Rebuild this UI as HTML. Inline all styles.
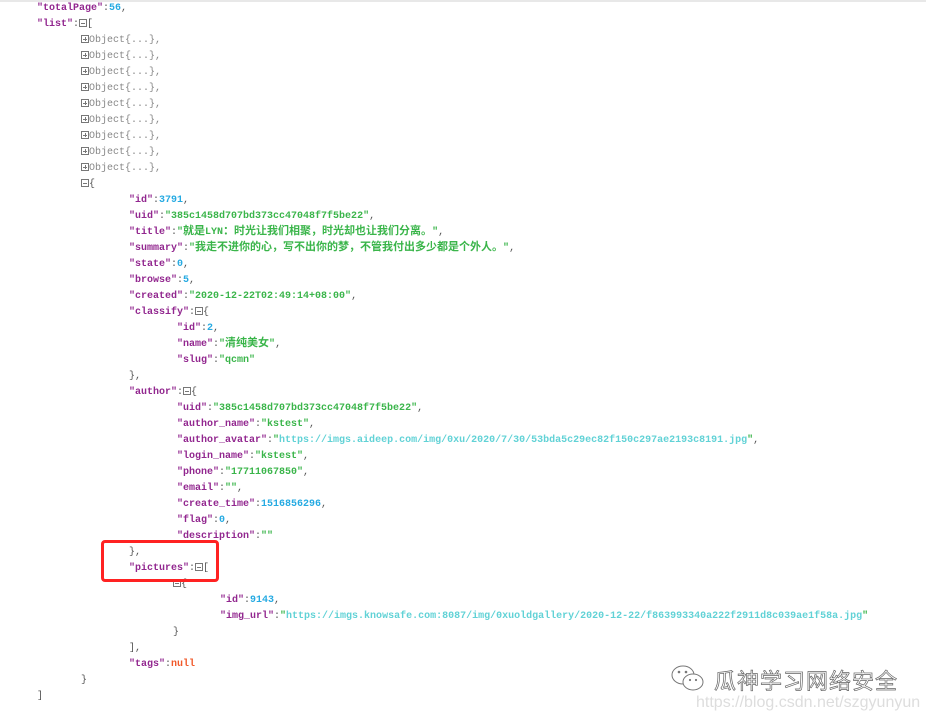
<!DOCTYPE html>
<html><head><meta charset="utf-8"><style>
html,body{margin:0;padding:0;background:#fff;width:926px;height:722px;overflow:hidden;position:relative}
.top{position:absolute;left:0;top:0;width:926px;height:2px;background:#e8e8e8}
.c{position:absolute;left:0;top:1px;font-family:"Liberation Mono","Noto Sans CJK SC",monospace;font-size:10px;line-height:16px;color:#555}
.l{height:16px;line-height:16px;position:relative;white-space:pre;overflow:visible}
.k{color:#92278f;font-weight:bold}
.s{color:#3ab54a;font-weight:bold}
.n{color:#25aae2;font-weight:bold}
.u{color:#61d2d6;font-weight:bold}
.x{color:#f1592a;font-weight:bold}
.o{color:#888}
.z{font-family:"Noto Sans CJK SC",sans-serif;font-size:11px;font-weight:bold;line-height:0}
.b{display:inline-block;width:8px;height:8px;border:1px solid #777;box-sizing:border-box;vertical-align:-1px;position:relative}
.b:before{content:"";position:absolute;left:1px;right:1px;top:3px;height:1px;background:#777}
.p:after{content:"";position:absolute;top:1px;bottom:1px;left:3px;width:1px;background:#777}
.box{position:absolute;left:101px;top:540px;width:112px;height:36px;border:3px solid #f22;border-radius:4px}
.wm{position:absolute;left:714px;top:666px;font-family:"Noto Sans CJK SC",sans-serif;font-size:22px;line-height:28px;color:#fff;-webkit-text-stroke:0.7px #666;letter-spacing:1px}
.wm2{position:absolute;left:696px;top:694px;font-family:"Liberation Sans",sans-serif;font-size:16px;color:#ddd}
</style></head><body>
<div class="top"></div>
<div class="c">
<div class="l" style="left:37px"><span class="k">"totalPage"</span>:<span class="n">56</span>,</div>
<div class="l" style="left:37px"><span class="k">"list"</span>:<span class="b"></span>[</div>
<div class="l o" style="left:81px"><span class="b p"></span>Object{...},</div>
<div class="l o" style="left:81px"><span class="b p"></span>Object{...},</div>
<div class="l o" style="left:81px"><span class="b p"></span>Object{...},</div>
<div class="l o" style="left:81px"><span class="b p"></span>Object{...},</div>
<div class="l o" style="left:81px"><span class="b p"></span>Object{...},</div>
<div class="l o" style="left:81px"><span class="b p"></span>Object{...},</div>
<div class="l o" style="left:81px"><span class="b p"></span>Object{...},</div>
<div class="l o" style="left:81px"><span class="b p"></span>Object{...},</div>
<div class="l o" style="left:81px"><span class="b p"></span>Object{...},</div>
<div class="l" style="left:81px"><span class="b"></span>{</div>
<div class="l" style="left:129px"><span class="k">"id"</span>:<span class="n">3791</span>,</div>
<div class="l" style="left:129px"><span class="k">"uid"</span>:<span class="s">"385c1458d707bd373cc47048f7f5be22"</span>,</div>
<div class="l" style="left:129px"><span class="k">"title"</span>:<span class="s">"<span class="z">就是</span>LYN<span class="z">：时光让我们相聚，时光却也让我们分离。</span>"</span>,</div>
<div class="l" style="left:129px"><span class="k">"summary"</span>:<span class="s">"<span class="z">我走不进你的心，写不出你的梦，不管我付出多少都是个外人。</span>"</span>,</div>
<div class="l" style="left:129px"><span class="k">"state"</span>:<span class="n">0</span>,</div>
<div class="l" style="left:129px"><span class="k">"browse"</span>:<span class="n">5</span>,</div>
<div class="l" style="left:129px"><span class="k">"created"</span>:<span class="s">"2020-12-22T02:49:14+08:00"</span>,</div>
<div class="l" style="left:129px"><span class="k">"classify"</span>:<span class="b"></span>{</div>
<div class="l" style="left:177px"><span class="k">"id"</span>:<span class="n">2</span>,</div>
<div class="l" style="left:177px"><span class="k">"name"</span>:<span class="s">"<span class="z">清纯美女</span>"</span>,</div>
<div class="l" style="left:177px"><span class="k">"slug"</span>:<span class="s">"qcmn"</span></div>
<div class="l" style="left:129px">},</div>
<div class="l" style="left:129px"><span class="k">"author"</span>:<span class="b"></span>{</div>
<div class="l" style="left:177px"><span class="k">"uid"</span>:<span class="s">"385c1458d707bd373cc47048f7f5be22"</span>,</div>
<div class="l" style="left:177px"><span class="k">"author_name"</span>:<span class="s">"kstest"</span>,</div>
<div class="l" style="left:177px"><span class="k">"author_avatar"</span>:<span class="s">"</span><span class="u">https://imgs.aideep.com/img/0xu/2020/7/30/53bda5c29ec82f150c297ae2193c8191.jpg</span><span class="s">"</span>,</div>
<div class="l" style="left:177px"><span class="k">"login_name"</span>:<span class="s">"kstest"</span>,</div>
<div class="l" style="left:177px"><span class="k">"phone"</span>:<span class="s">"17711067850"</span>,</div>
<div class="l" style="left:177px"><span class="k">"email"</span>:<span class="s">""</span>,</div>
<div class="l" style="left:177px"><span class="k">"create_time"</span>:<span class="n">1516856296</span>,</div>
<div class="l" style="left:177px"><span class="k">"flag"</span>:<span class="n">0</span>,</div>
<div class="l" style="left:177px"><span class="k">"description"</span>:<span class="s">""</span></div>
<div class="l" style="left:129px">},</div>
<div class="l" style="left:129px"><span class="k">"pictures"</span>:<span class="b"></span>[</div>
<div class="l" style="left:173px"><span class="b"></span>{</div>
<div class="l" style="left:220px"><span class="k">"id"</span>:<span class="n">9143</span>,</div>
<div class="l" style="left:220px"><span class="k">"img_url"</span>:<span class="s">"</span><span class="u">https://imgs.knowsafe.com:8087/img/0xuoldgallery/2020-12-22/f863993340a222f2911d8c039ae1f58a.jpg</span><span class="s">"</span></div>
<div class="l" style="left:173px">}</div>
<div class="l" style="left:129px">],</div>
<div class="l" style="left:129px"><span class="k">"tags"</span>:<span class="x">null</span></div>
<div class="l" style="left:81px">}</div>
<div class="l" style="left:37px">]</div>
</div>
<div class="box"></div>
<svg style="position:absolute;left:669px;top:664px" width="40" height="30" viewBox="0 0 40 30"><ellipse cx="14" cy="11" rx="11" ry="9" fill="#fff" stroke="#777" stroke-width="1"/><ellipse cx="24" cy="18" rx="10" ry="8" fill="#fff" stroke="#777" stroke-width="1"/><circle cx="10" cy="8" r="1.3" fill="#777"/><circle cx="17" cy="8" r="1.3" fill="#777"/><circle cx="21" cy="16" r="1.1" fill="#777"/><circle cx="27" cy="16" r="1.1" fill="#777"/></svg>
<div class="wm">瓜神学习网络安全</div>
<div class="wm2">https://blog.csdn.net/szgyunyun</div>
</body></html>
